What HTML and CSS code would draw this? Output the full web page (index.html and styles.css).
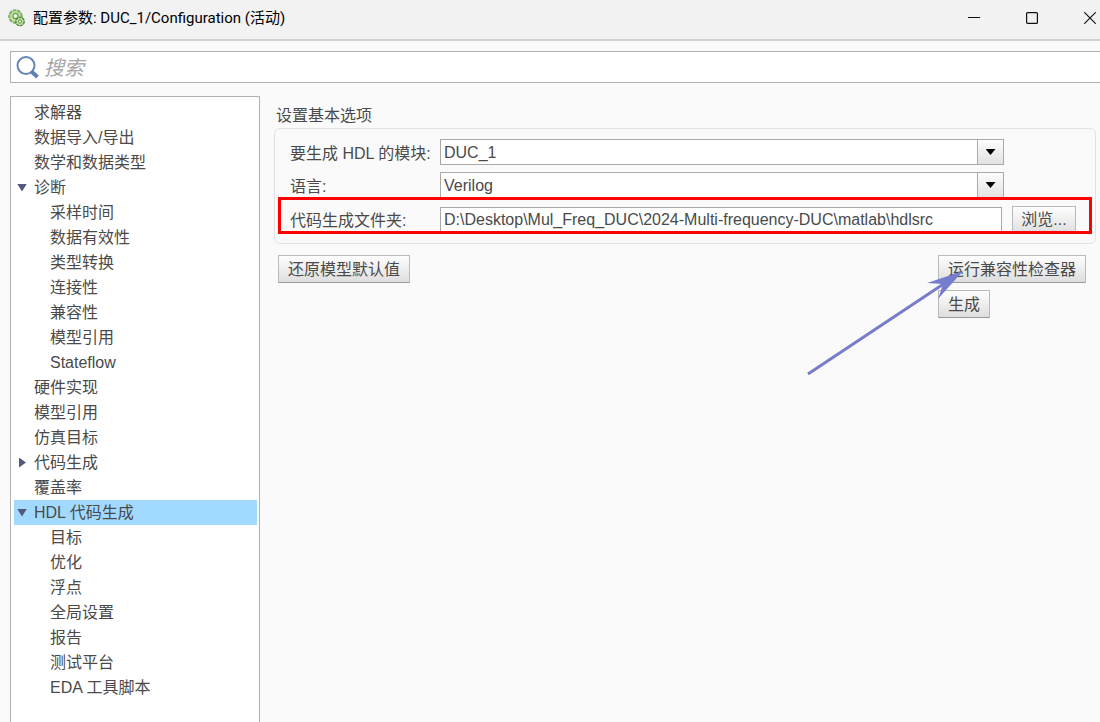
FILE: index.html
```html
<!DOCTYPE html>
<html lang="zh-CN">
<head>
<meta charset="utf-8">
<title>配置参数: DUC_1/Configuration (活动)</title>
<link rel="stylesheet" href="styles.css">
</head>
<body>
<header class="titlebar">
  <svg class="app-icon" width="18" height="18" viewBox="0 0 18 18" aria-hidden="true">
    <circle cx="7.500" cy="7.500" r="6.200" fill="#c5e99c" stroke="#83ad6c" stroke-width="2.200" stroke-dasharray="3.500 .8"/>
    <circle cx="7.500" cy="7.500" r="4.800" fill="#c5e99c" stroke="#b4dc8e"/>
    <circle cx="7.500" cy="7" r="2.600" fill="#eef6e8" stroke="#689851" stroke-width="1.200"/>
    <circle cx="12" cy="12.500" r="4.200" fill="#c5e99c" stroke="#5b8b48" stroke-width="1.500" stroke-dasharray="3 .6"/>
    <circle cx="12" cy="12.500" r="1.700" fill="#e8f3df" stroke="#5b8b48"/>
  </svg>
  <h1 class="title">配置参数: DUC_1/Configuration (活动)</h1>
  <div class="window-controls">
    <button type="button" class="win-btn" aria-label="最小化"><svg width="12" height="12" viewBox="0 0 12 12"><path d="M0 5.500H12" stroke="#111"/></svg></button>
    <button type="button" class="win-btn" aria-label="最大化"><svg width="12" height="12" viewBox="0 0 12 12"><rect x=".6" y=".6" width="10.800" height="10.800" rx="1" fill="none" stroke="#111" stroke-width="1.200"/></svg></button>
    <button type="button" class="win-btn" aria-label="关闭"><svg width="12" height="12" viewBox="0 0 12 12"><path d="M.3.3L11.700 11.700M11.700.3L.3 11.700" stroke="#111" stroke-width="1.200"/></svg></button>
  </div>
</header>

<div class="search">
  <svg width="24" height="24" viewBox="0 0 24 24" aria-hidden="true">
    <circle cx="10" cy="10.500" r="8.500" fill="#fff" stroke="#6485b8" stroke-width="2"/>
    <path d="M15.500 16.500L21.500 22" stroke="#5f80b3" stroke-width="4"/>
  </svg>
  <input class="search-input" type="search" placeholder="搜索" aria-label="搜索">
</div>

<div class="workspace">
  <nav class="tree" aria-label="配置类别">
    <a class="node" href="#">求解器</a>
    <a class="node" href="#">数据导入/导出</a>
    <a class="node" href="#">数学和数据类型</a>
    <a class="node open" href="#">诊断</a>
    <a class="node child" href="#">采样时间</a>
    <a class="node child" href="#">数据有效性</a>
    <a class="node child" href="#">类型转换</a>
    <a class="node child" href="#">连接性</a>
    <a class="node child" href="#">兼容性</a>
    <a class="node child" href="#">模型引用</a>
    <a class="node child" href="#">Stateflow</a>
    <a class="node" href="#">硬件实现</a>
    <a class="node" href="#">模型引用</a>
    <a class="node" href="#">仿真目标</a>
    <a class="node closed" href="#">代码生成</a>
    <a class="node" href="#">覆盖率</a>
    <a class="node open selected" href="#" aria-current="page">HDL 代码生成</a>
    <a class="node child" href="#">目标</a>
    <a class="node child" href="#">优化</a>
    <a class="node child" href="#">浮点</a>
    <a class="node child" href="#">全局设置</a>
    <a class="node child" href="#">报告</a>
    <a class="node child" href="#">测试平台</a>
    <a class="node child" href="#">EDA 工具脚本</a>
  </nav>

  <main class="panel">
    <h2 class="group-title">设置基本选项</h2>
    <section class="group">
      <div class="row">
        <label class="label" for="module">要生成 HDL 的模块:</label>
        <div class="combo">
          <select id="module"><option>DUC_1</option></select>
          <span class="combo-arrow"></span>
        </div>
      </div>
      <div class="row">
        <label class="label" for="language">语言:</label>
        <div class="combo">
          <select id="language"><option>Verilog</option></select>
          <span class="combo-arrow"></span>
        </div>
      </div>
      <div class="row folder">
        <label class="label" for="folder">代码生成文件夹:</label>
        <input id="folder" class="field" type="text" value="D:\Desktop\Mul_Freq_DUC\2024-Multi-frequency-DUC\matlab\hdlsrc">
        <button type="button" class="btn">浏览...</button>
        <span class="highlight"></span>
      </div>
    </section>
    <div class="actions">
      <button type="button" class="btn">还原模型默认值</button>
      <div class="run">
        <button type="button" class="btn">运行兼容性检查器</button>
        <button type="button" class="btn">生成</button>
        <svg class="pointer" width="160" height="110" viewBox="0 0 160 110" aria-hidden="true">
          <path d="M2 108L142 15" stroke="#777dcd" stroke-width="3"/>
          <path d="M157 5L121 17L137 18L132 33Z" fill="#777dcd"/>
        </svg>
      </div>
    </div>
  </main>
</div>
</body>
</html>
```

FILE: styles.css
```css
* {
  box-sizing: border-box;
}

body {
  margin: 0;
  min-height: 100vh;
  display: flex;
  flex-direction: column;
  overflow-x: hidden;
  background: #fafafa;
  color: #4a4a4a;
  font: 16px/25px "Liberation Sans", "Noto Sans CJK SC", sans-serif;
}

button,
input,
select {
  font: inherit;
  color: inherit;
  border-radius: 0;
}

.titlebar {
  display: flex;
  align-items: center;
  height: 41px;
  padding: 0 0 4px 8px;
  gap: 7px;
  background: #f2f2f2;
  border-bottom: 2px solid #d2d2d2;
}

.title {
  margin: 0;
  flex: 1;
  color: #000;
  font: 15px/20px Roboto, "Noto Sans CJK SC", sans-serif;
}

.window-controls {
  display: flex;
  gap: 46px;
  padding-right: 4px;
}

.win-btn {
  display: flex;
  padding: 0;
  border: 0;
  background: none;
}

.search {
  display: flex;
  align-items: center;
  gap: 4px;
  height: 32px;
  margin: 10px 0 13px 10px;
  padding-left: 5px;
  border: 1px solid #b1b1b1;
  border-right: 0;
  background: #fff;
}

.search-input {
  flex: 1;
  padding: 3px 0 0;
  border: 0;
  outline: 0;
  background: none;
  font-size: 20px;
  font-style: italic;
}

.search-input::placeholder {
  color: #a6a6a6;
}

.workspace {
  flex: 1;
  display: flex;
}

.tree {
  display: flex;
  flex-direction: column;
  flex: 0 0 250px;
  margin-left: 10px;
  padding: 3px 2px 0 3px;
  border: 1px solid #b1b1b1;
  border-bottom: 0;
  background: #fff;
}

.node {
  display: flex;
  align-items: center;
  height: 25px;
  padding-left: 20px;
  color: inherit;
  text-decoration: none;
}

.child {
  padding-left: 36px;
}

.open,
.closed {
  padding-left: 3px;
  gap: 7px;
}

.open::before,
.closed::before {
  content: "";
  width: 10px;
  height: 8px;
  background: #53597a;
  clip-path: polygon(0 0, 100% 0, 50% 100%);
}

.closed::before {
  height: 10px;
  clip-path: polygon(20% 0, 90% 50%, 20% 100%);
}

.selected {
  background: #a2daff;
}

.panel {
  flex: 1;
  padding: 8px 4px 0 14px;
}

.group-title {
  margin: 0 2px;
  font-size: 16px;
  font-weight: 400;
  line-height: 24px;
}

.group {
  display: flex;
  flex-direction: column;
  gap: 7px;
  padding: 10px 91px 8px 15px;
  border: 1px solid #e2e2e2;
  border-radius: 6px;
}

.row {
  display: flex;
  align-items: center;
  height: 26px;
}

.label {
  flex: 0 0 150px;
  padding-top: 2px;
}

.combo {
  flex: 1;
  display: flex;
  height: 26px;
  position: relative;
}

.combo select {
  flex: 1;
  appearance: none;
  padding: 0 30px 0 3px;
  border: 1px solid #a9a9a9;
  background: #fff;
}

.combo-arrow {
  position: absolute;
  inset: 1px 1px 1px auto;
  width: 26px;
  display: grid;
  place-items: center;
  border-left: 1px solid #a9a9a9;
  background: linear-gradient(#fdfdfd, #e2e2e2);
  pointer-events: none;
}

.combo-arrow::before {
  content: "";
  width: 10px;
  height: 6px;
  background: #000;
  clip-path: polygon(0 0, 100% 0, 50% 100%);
}

.folder {
  height: 30px;
  margin-right: -72px;
  position: relative;
}

.folder .label {
  padding-top: 0;
}

.folder .btn {
  width: 64px;
  margin-left: 10px;
  padding: 0;
}

.field {
  flex: 1;
  min-width: 0;
  height: 26px;
  padding: 0 3px;
  border: 1px solid #a9a9a9;
  background: #fff;
}

.highlight {
  position: absolute;
  inset: -8px -16px 1px -12px;
  border: 3px solid #f00;
  pointer-events: none;
}

.btn {
  height: 28px;
  padding: 2px 9px 0;
  border: 1px solid #b9b9b9;
  border-bottom-color: #999;
  background: linear-gradient(#fefefe, #dedede);
  line-height: 24px;
  white-space: nowrap;
}

.actions {
  display: flex;
  justify-content: space-between;
  align-items: flex-start;
  padding: 11px 10px 0 4px;
}

.run {
  display: flex;
  flex-direction: column;
  align-items: flex-start;
  gap: 7px;
  position: relative;
}

.pointer {
  position: absolute;
  left: -132px;
  top: 11px;
  pointer-events: none;
}
```
